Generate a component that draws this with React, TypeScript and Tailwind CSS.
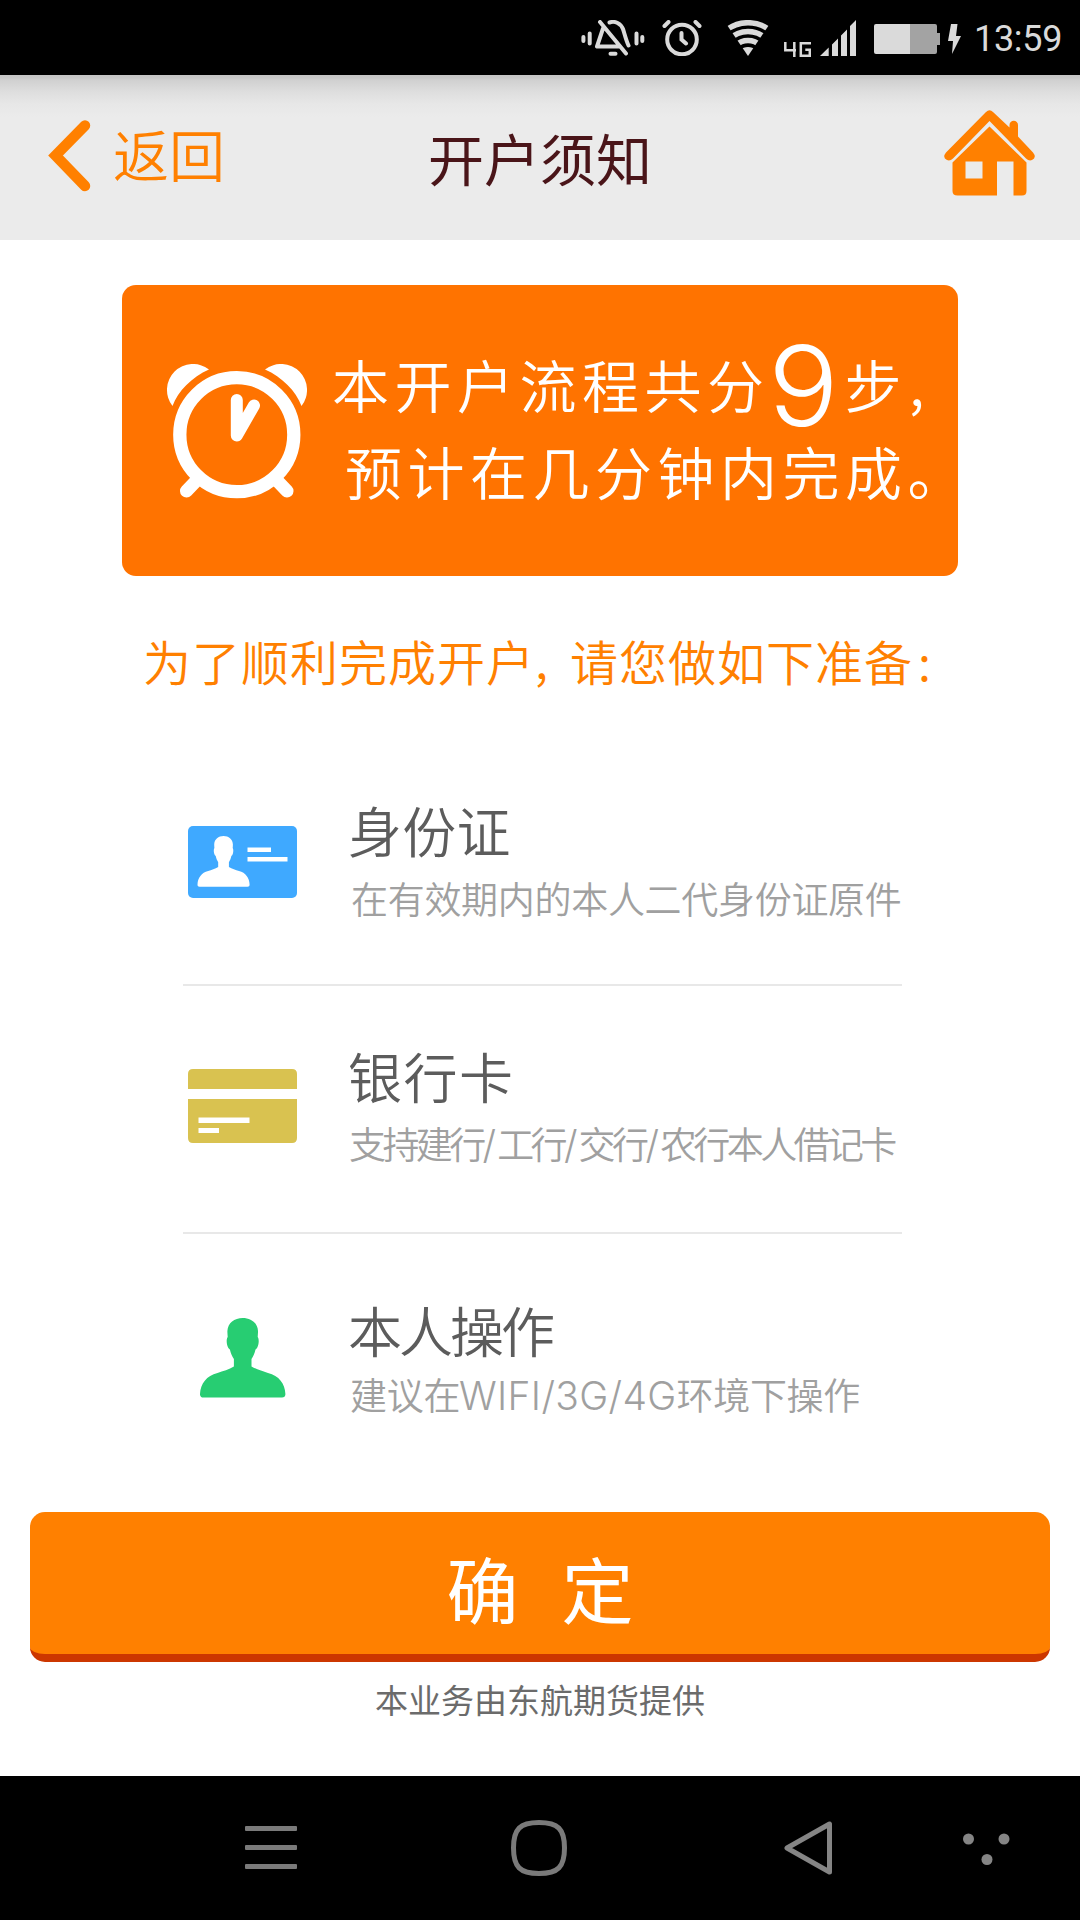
import type { ReactNode } from "react";

interface PrepItem {
  title: string;
  hint: ReactNode;
  icon: ReactNode;
  rowClass: string;
  iconClass: string;
  textClass: string;
  titleClass: string;
  hintClass: string;
}

const PERSON_PATH =
  "M42.7 0C51 0 57.6 5 58 13c.1 2-.2 4-.3 6 1.500 2 1.300 7-.4 10.500-.6 1.300-1.300 1.500-1.800 2-.8 4-2.300 7-4 9.500V48.500c5 3 11 4.500 16.500 6.500C79 57.500 85 66 85.400 76c.1 2-1.200 3.600-3.400 3.600H3.400C1.200 79.600-.1 78 0 76c.5-10 6.500-18.500 17.500-21 5.500-2 11.500-3.500 16.400-6.500V41c-1.700-2.500-3.200-5.500-4-9.500-.5-.5-1.200-.7-1.800-2-1.700-3.500-1.900-8.500-.4-10.500-.1-2-.4-4-.3-6C27.800 5 34.400 0 42.700 0Z";

function StatusBar() {
  return (
    <div className="flex h-[75px] items-start bg-black pl-[581px]">
      <svg className="mt-5 h-9 w-16 shrink-0" viewBox="0 0 64 36" fill="none" stroke="#dadada" strokeWidth="4" strokeLinecap="round">
        <path d="M2.400 17v4M8.700 13.500v10M55.500 13.500v10M61.300 17v4" />
        <path d="M28.500 2.500C34 .5 40 3.500 42 9c1.500 4.500 3 11 5.500 16.500" />
        <path d="M22 8.500 16 26.500h22M19 2l26 31.500" strokeLinejoin="round" />
        <path d="M29.500 33.800h5" />
      </svg>
      <svg className="mt-5 ml-[17px] h-9 w-10 shrink-0" viewBox="0 0 40 36" fill="none" stroke="#dadada" strokeWidth="4" strokeLinecap="round">
        <circle cx="20" cy="19.500" r="14.800" />
        <path d="m2.500 6 4-4M37.500 6l-4-4M19.500 13v6.500l4.500 4" />
      </svg>
      <svg className="mt-5 ml-[25px] h-9 w-[42px] shrink-0" viewBox="0 0 42 36">
        <clipPath id="wifi-fan">
          <path d="M-2 2 21 36 44 2V-4H-2Z" />
        </clipPath>
        <g clipPath="url(#wifi-fan)" fill="none" stroke="#dadada" strokeWidth="5.500">
          <circle cx="21" cy="38" r="35.300" />
          <circle cx="21" cy="38" r="26.500" />
          <circle cx="21" cy="38" r="17.500" />
          <circle cx="21" cy="38" r="5.500" strokeWidth="11" />
        </g>
      </svg>
      <svg className="mt-[42px] ml-[15px] h-[15px] w-[27px] shrink-0" viewBox="0 0 27 15" fill="none" stroke="#dadada" strokeWidth="2.500">
        <path d="M1.300 0v8.300H12M10.300 0v15M27 1.300H16.800v12.400h9v-6h-4.500" />
      </svg>
      <svg className="mt-5 ml-[9px] h-9 w-9 shrink-0" viewBox="0 0 36 36" fill="#dadada">
        <path d="M0 36 8.700 27.500V36ZM12 24.500 18 18.500V36H12ZM21 15.500 27 9.500V36H21ZM30 6 36 0V36H30Z" />
      </svg>
      <svg className="mt-6 ml-[18px] h-[30px] w-[66px] shrink-0" viewBox="0 0 66 30">
        <path d="M36 0h25a2 2 0 0 1 2 2v7h3v12h-3v7a2 2 0 0 1-2 2H36Z" fill="#a3a3a3" />
        <path d="M2 0h34v30H2a2 2 0 0 1-2-2V2a2 2 0 0 1 2-2Z" fill="#dadada" />
      </svg>
      <svg className="mt-6 ml-[8px] h-[30px] w-[13px] shrink-0" viewBox="0 0 13 30" fill="#dadada">
        <path d="M3 0h6.500L8 12h5L4 30 5 17H0Z" />
      </svg>
      <span className="mt-[18px] ml-[13px] font-['Roboto',sans-serif] text-[36px] leading-[42px] tracking-[-0.300px] text-[#dadada]">13:59</span>
    </div>
  );
}

function Header() {
  return (
    <header className="grid h-[165px] grid-cols-3 bg-[#ebebeb] bg-[linear-gradient(#c5c5c5_0px,#c8c8c8_3px,#d0d0d0_5px,#dedede_17px,#e7e7e7_29px,#ebebeb_42px)]">
      <button type="button" className="flex items-start pl-12 text-left text-[#ff8000]">
        <svg className="mt-[44px] h-[73px] w-[43px]" viewBox="0 0 43 73" fill="none" stroke="currentColor" strokeWidth="10.500" strokeLinecap="round">
          <path d="M37 6.500 7.500 36.500 37 67" />
        </svg>
        <span className="mt-[43px] ml-[22px] text-[56px] leading-[70px] font-[350]">返回</span>
      </button>
      <h1 className="mt-[47px] text-center text-[56px] leading-[70px] font-normal text-[#4a1519]">开户须知</h1>
      <button type="button" className="flex items-start justify-end pr-[45px]">
        <svg className="mt-[35px] h-[86px] w-[91px]" viewBox="0 0 91 86" fill="#ff8000">
          <path d="M42 2q3.500-3.500 7 0L65.500 17.500V15a4.200 4.200 0 0 1 8.500 0V26.500L89 42.500q4 5-1 7.500-3 1.300-6-1.500L45.500 11 9 48.500q-3 2.800-6 1.500-5-2.500-1-7.500Z" />
          <path fillRule="evenodd" d="M45.500 16.500 82.500 52.500V81q0 4.500-4.500 4.500H69.500V51.500H53V85.500H13.500Q8.500 85.500 8.500 81V52.500ZM21.500 51.500V68.500H38.500V51.500Z" />
        </svg>
      </button>
    </header>
  );
}

function NoticeCard() {
  return (
    <section className="mx-auto mt-[45px] flex h-[291px] w-[836px] items-start rounded-[14px] bg-[#ff7300] text-white">
      <svg className="mt-[79px] ml-[44px] h-[135px] w-[141px] shrink-0" viewBox="0 0 141 135" fill="none" stroke="white" strokeLinecap="round">
        <path d="M6.500 42A26 26 0 0 1 43 5.500C26 13 12 27 6.500 42ZM135.500 42A26 26 0 0 0 99 5.500C116 13 130 27 135.500 42Z" fill="white" stroke="none" />
        <circle cx="70.800" cy="70.700" r="57" strokeWidth="13.300" />
        <path d="M70.800 36v35.500L88 41.500" strokeWidth="12" strokeLinejoin="round" />
        <path d="M31 116 20.500 127M110.500 116l10.500 11" strokeWidth="13" />
      </svg>
      <div className="mt-[55px] ml-[25px] text-[57px] leading-[87px] font-[350] tracking-[5.500px] whitespace-nowrap">
        <p className="flex h-[87px]">
          本开户流程共分
          <span className="w-[71px] origin-center scale-x-[1.06] pr-1 text-center font-['Inter',sans-serif] text-[111px] leading-[91px] font-[350] tracking-normal">9</span>
          <span className="ml-[4px]">步</span>
          <span className="ml-[2px] leading-[82px] tracking-normal">,</span>
        </p>
        <p className="pl-[13px]">预计在几分钟内完成。</p>
      </div>
    </section>
  );
}

function Latin({ children }: { children: string }) {
  return <span className="-ml-px font-['Inter',sans-serif] text-[39px] font-light tracking-[0.300px]">{children}</span>;
}

function Slash() {
  return <span className="mr-px font-['Inter',sans-serif] text-[39px] font-light tracking-normal">/</span>;
}

const items: PrepItem[] = [
  {
    title: "身份证",
    hint: "在有效期内的本人二代身份证原件",
    icon: (
      <svg className="h-[72px] w-[109px]" viewBox="0 0 109 72">
        <rect width="109" height="72" rx="5" fill="#3fa9ff" />
        <path d={PERSON_PATH} transform="translate(9.500 10) scale(.61 .638)" fill="white" />
        <path d="M59.500 21.500H83V26H59.500ZM59.500 31H99.500V35.500H59.500Z" fill="white" />
      </svg>
    ),
    rowClass: "h-[297px] border-b-2",
    iconClass: "pt-[137px]",
    textClass: "pt-[108px]",
    titleClass: "tracking-[0.300px]",
    hintClass: "mt-[10px] pl-[3px] tracking-[-0.300px]",
  },
  {
    title: "银行卡",
    hint: (
      <>
        支持建行
        <Slash />
        工行
        <Slash />
        交行
        <Slash />
        农行本人借记卡
      </>
    ),
    icon: (
      <svg className="h-[74px] w-[109px]" viewBox="0 0 109 74" fill="#d9c250">
        <path d="M5 0H104Q109 0 109 5V20H0V5Q0 0 5 0Z" />
        <path fillRule="evenodd" d="M0 30H109V69Q109 74 104 74H5Q0 74 0 69ZM10.500 48.500V54H61.500V48.500ZM10.500 59V64H31V59Z" />
      </svg>
    ),
    rowClass: "h-[248px] border-b-2",
    iconClass: "pt-[83px]",
    textClass: "pt-[57px]",
    titleClass: "tracking-[1.500px]",
    hintClass: "mt-[9px] pl-px tracking-[-3.600px]",
  },
  {
    title: "本人操作",
    hint: (
      <>
        建议在<Latin>WIFI/3G/4G</Latin>环境下操作
      </>
    ),
    icon: (
      <svg className="ml-[12px] h-[80px] w-[86px]" viewBox="0 0 86 80" fill="#27cd72">
        <path d={PERSON_PATH} />
      </svg>
    ),
    rowClass: "h-[278px]",
    iconClass: "pt-[84px]",
    textClass: "pt-[63px]",
    titleClass: "tracking-[-3px]",
    hintClass: "mt-[6px] pl-[2px] tracking-[-0.300px]",
  },
];

function PrepRow({ item }: { item: PrepItem }) {
  return (
    <li className={`flex items-start border-[#e8e8e8] ${item.rowClass}`}>
      <div className={`ml-[5px] w-[109px] shrink-0 ${item.iconClass}`}>{item.icon}</div>
      <div className={`ml-[51px] whitespace-nowrap ${item.textClass}`}>
        <h2 className={`text-[54px] leading-[66px] font-[350] text-[#5c5c5c] ${item.titleClass}`}>{item.title}</h2>
        <p className={`h-[50px] text-[37px] leading-[50px] font-[350] text-[#a0a0a0] ${item.hintClass}`}>{item.hint}</p>
      </div>
    </li>
  );
}

function NavBar() {
  return (
    <nav className="flex h-36 items-start bg-black">
      <svg className="mt-[50px] ml-[245px] h-[43px] w-[52px]" viewBox="0 0 52 43" fill="#7a7a7a">
        <rect width="52" height="5" rx="1" />
        <rect y="19" width="52" height="5" rx="1" />
        <rect y="38" width="52" height="5" rx="1" />
      </svg>
      <svg className="mt-[44px] ml-[214px] h-14 w-14" viewBox="0 0 56 56" fill="none" stroke="#7a7a7a" strokeWidth="5">
        <path d="M28 2.500C47 2.500 53.500 9 53.500 28S47 53.500 28 53.500 2.500 47 2.500 28 9 2.500 28 2.500Z" />
      </svg>
      <svg className="mt-[45px] ml-[217px] h-[54px] w-12" viewBox="0 0 48 54" fill="none" stroke="#858585" strokeWidth="5" strokeLinejoin="round">
        <path d="M45.500 3v48L3 27Z" />
      </svg>
      <svg className="mt-[57px] ml-[131px] h-[33px] w-[47px]" viewBox="0 0 47 33" fill="#858585">
        <circle cx="5.500" cy="6" r="5.500" />
        <circle cx="41" cy="6" r="5.500" />
        <circle cx="24" cy="26.500" r="5.500" />
      </svg>
    </nav>
  );
}

export default function App() {
  return (
    <div className="flex h-[1920px] w-[1080px] flex-col overflow-hidden bg-white font-['Noto_Sans_CJK_SC',sans-serif]">
      <StatusBar />
      <Header />
      <main className="flex h-[1536px] flex-col">
        <NoticeCard />
        <p className="mt-[54px] flex h-[59px] pl-[143px] text-[48px] leading-[60px] font-[350] tracking-[1px] whitespace-nowrap text-[#ff8000]">
          为了顺利完成开户
          <span className="w-[35px] leading-[57px]">,</span>
          请您做如下准备
          <span className="pl-[5px]">:</span>
        </p>
        <ul className="ml-[183px] w-[719px]">
          {items.map((item) => (
            <PrepRow key={item.title} item={item} />
          ))}
        </ul>
        <button
          type="button"
          className="mx-auto flex h-[150px] w-[1020px] shrink-0 justify-center gap-[43px] rounded-[15px] border-b-[8px] border-[#cc3700] bg-[#ff8000] pt-[30px] text-[72px] leading-[90px] text-white"
        >
          <span>确</span>
          <span>定</span>
        </button>
        <p className="mt-[16px] text-center text-[33px] leading-[42px] text-[#6b6b6b]">本业务由东航期货提供</p>
      </main>
      <NavBar />
    </div>
  );
}
